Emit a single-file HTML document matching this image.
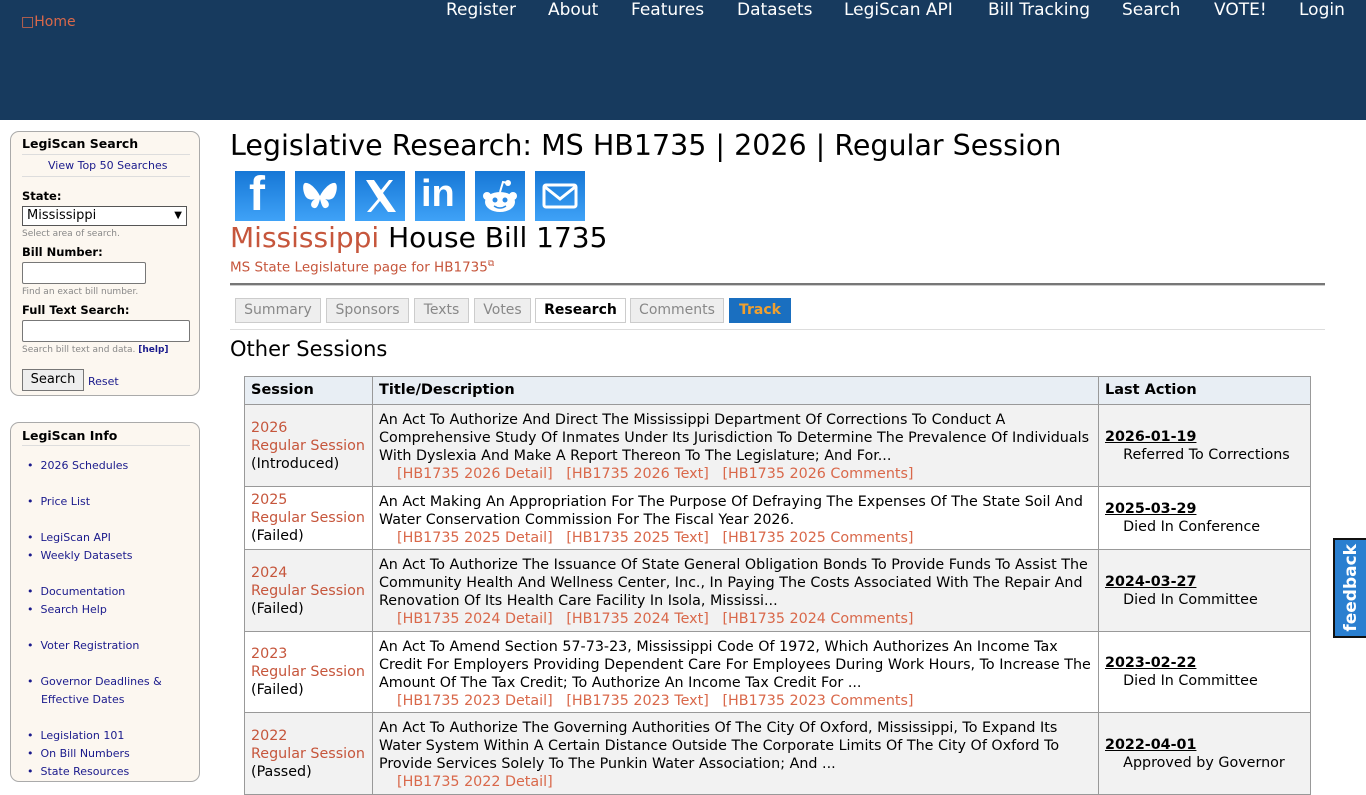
<!DOCTYPE html>
<html><head><meta charset="utf-8"><style>
*{box-sizing:border-box}
body{margin:0;width:1366px;height:768px;overflow:hidden;background:#fff;font-family:"DejaVu Sans","Liberation Sans",sans-serif;color:#000;position:relative}
.a{position:absolute;white-space:nowrap}
#hdr{position:absolute;left:0;top:0;width:1366px;height:120px;background:#173a5e}
#hdr .n{position:absolute;top:0;color:#fff;font-size:17px}
.box{position:absolute;left:10px;width:190px;background:#fcf7f0;border:1px solid #aaa;border-radius:9px}
.box h4{margin:0;position:absolute;left:11px;font-size:12.5px;font-weight:bold}
.hr{position:absolute;left:11px;width:168px;height:1px;background:#ddd}
.lbl{font-size:11.5px;font-weight:bold}
.hint{font-size:9px;color:#888}
.lnk{color:#1a1a8c;font-size:11px}
.sh{position:absolute;top:171px;width:50px;height:50px;background:linear-gradient(#1677d6,#3fa2f7)}
.tab{position:absolute;top:298px;height:25px;border:1px solid #ccc;background:#eee;color:#888;font-size:14px;text-align:center;line-height:23px}
table{position:absolute;left:244px;top:376px;border-collapse:collapse;font-size:14.3px;width:1067px}
td,th{border:1px solid #999;vertical-align:top;padding:6px 6px 0 6px;line-height:18px;white-space:nowrap}
td.m{vertical-align:middle;padding-top:0}
th{background:#e8eef4;text-align:left;height:28px;font-size:14.5px;padding-top:4px}
tr.g td{background:#f2f2f2}
.r{color:#c6563c}
.lk{color:#d9684a;padding-left:18px}
.d{font-weight:bold;text-decoration:underline;display:block}
</style></head><body>
<div id="hdr">
<span class="a" style="left:21px;top:14px;color:#d9684a;font-size:14px">&#9633;Home</span>
<span class="n" style="left:446px">Register</span>
<span class="n" style="left:548px">About</span>
<span class="n" style="left:631px">Features</span>
<span class="n" style="left:737px">Datasets</span>
<span class="n" style="left:844px">LegiScan API</span>
<span class="n" style="left:988px">Bill Tracking</span>
<span class="n" style="left:1122px">Search</span>
<span class="n" style="left:1214px">VOTE!</span>
<span class="n" style="left:1299px">Login</span>
</div>

<div class="box" style="top:131px;height:265px">
<h4 style="top:4px">LegiScan Search</h4>
<div class="hr" style="top:22px"></div>
<span class="a lnk" style="left:37px;top:27px">View Top 50 Searches</span>
<div class="hr" style="top:44px"></div>
<span class="a lbl" style="left:11px;top:57px">State:</span>
<div class="a" style="left:11px;top:74px;width:165px;height:20px;border:1px solid #555;background:#fff;font-size:13px;padding-left:4px;line-height:18px">Mississippi<span style="position:absolute;right:4px;font-size:10px">&#9660;</span></div>
<span class="a hint" style="left:11px;top:97px">Select area of search.</span>
<span class="a lbl" style="left:11px;top:113px">Bill Number:</span>
<div class="a" style="left:11px;top:130px;width:124px;height:22px;border:1px solid #777;background:#fff;border-radius:2px"></div>
<span class="a hint" style="left:11px;top:155px">Find an exact bill number.</span>
<span class="a lbl" style="left:11px;top:171px">Full Text Search:</span>
<div class="a" style="left:11px;top:188px;width:168px;height:22px;border:1px solid #777;background:#fff;border-radius:2px"></div>
<span class="a hint" style="left:11px;top:213px">Search bill text and data. <b style="color:#1a1a8c">[help]</b></span>
<div class="a" style="left:11px;top:237px;width:62px;height:22px;border:1px solid #777;background:#eee;font-size:13px;text-align:center;line-height:20px">Search</div>
<span class="a lnk" style="left:77px;top:243px">Reset</span>
</div>

<div class="box" style="top:422px;height:360px">
<h4 style="top:5px">LegiScan Info</h4>
<div class="hr" style="top:22px"></div>
<div class="a lnk" style="left:16px;top:34px;line-height:18px">
&bull;&nbsp; 2026 Schedules<br><br>&bull;&nbsp; Price List<br><br>&bull;&nbsp; LegiScan API<br>&bull;&nbsp; Weekly Datasets<br><br>&bull;&nbsp; Documentation<br>&bull;&nbsp; Search Help<br><br>&bull;&nbsp; Voter Registration<br><br>&bull;&nbsp; Governor Deadlines &amp;<br>&nbsp;&nbsp;&nbsp; Effective Dates<br><br>&bull;&nbsp; Legislation 101<br>&bull;&nbsp; On Bill Numbers<br>&bull;&nbsp; State Resources</div>
</div>

<span class="a" style="left:230px;top:129px;font-size:28.5px">Legislative Research: MS HB1735 | 2026 | Regular Session</span>
<div class="sh" style="left:235px"><span class="a" style="left:14px;top:-4px;color:#fff;font-size:48px;font-weight:bold;font-family:'Liberation Sans'">f</span></div>
<div class="sh" style="left:295px"><svg width="50" height="50"><path d="M25 25C21 17 14 11 10 12 7 13 8 22 11 26 13 29 18 29 20 28 15 31 15 36 19 37 23 38 24 31 25 28 26 31 27 38 31 37 35 36 35 31 30 28 32 29 37 29 39 26 42 22 43 13 40 12 36 11 29 17 25 25Z" fill="#fff"/></svg></div>
<div class="sh" style="left:355px"><svg width="50" height="50"><path d="M11 9h8l7 10 8-10h4L28 22l13 19h-8l-8-11-9 11h-4l11-13z" fill="#fff"/></svg></div>
<div class="sh" style="left:415px"><span class="a" style="left:6px;top:2px;color:#fff;font-size:38px;font-weight:bold;font-family:'Liberation Sans'">in</span></div>
<div class="sh" style="left:475px"><svg width="50" height="50"><ellipse cx="25" cy="31" rx="15" ry="10" fill="#fff"/><circle cx="12" cy="25" r="4" fill="#fff"/><circle cx="38" cy="25" r="4" fill="#fff"/><circle cx="33" cy="12" r="3" fill="#fff"/><path d="M25 21l3-10 5 1" stroke="#fff" stroke-width="2" fill="none"/><circle cx="20" cy="29" r="2.5" fill="#2a8ae6"/><circle cx="30" cy="29" r="2.5" fill="#2a8ae6"/><path d="M19 35q6 4 12 0" stroke="#2a8ae6" stroke-width="1.5" fill="none"/></svg></div>
<div class="sh" style="left:535px"><svg width="50" height="50"><rect x="9" y="14" width="32" height="22" rx="2" fill="none" stroke="#fff" stroke-width="3"/><path d="M10 16l15 12 15-12" stroke="#fff" stroke-width="3" fill="none"/></svg></div>
<span class="a" style="left:230px;top:221px;font-size:28px"><span style="color:#c6563c">Mississippi</span> House Bill 1735</span>
<span class="a" style="left:230px;top:259px;font-size:13.5px;color:#c6563c">MS State Legislature page for HB1735<sup style="font-size:9px">&#10697;</sup></span>
<div class="a" style="left:230px;top:283px;width:1095px;height:3px;border-top:2px solid #777;border-bottom:1px solid #ccc"></div>
<div class="tab" style="left:235px;width:86px">Summary</div>
<div class="tab" style="left:326px;width:83px">Sponsors</div>
<div class="tab" style="left:414px;width:55px">Texts</div>
<div class="tab" style="left:474px;width:57px">Votes</div>
<div class="tab" style="left:535px;width:91px;background:#fff;color:#000;font-weight:bold">Research</div>
<div class="tab" style="left:630px;width:94px">Comments</div>
<div class="tab" style="left:729px;width:62px;background:#1a6fc0;color:#f0a030;font-weight:bold;border-color:#1a6fc0">Track</div>
<div class="a" style="left:230px;top:329px;width:1095px;height:1px;background:#ddd"></div>
<span class="a" style="left:230px;top:337px;font-size:21px">Other Sessions</span>

<table>
<tr><th style="width:128px">Session</th><th style="width:726px">Title/Description</th><th>Last Action</th></tr>
<tr class="g" style="height:82px"><td class="m"><span class="r">2026<br>Regular Session</span><br>(Introduced)</td><td>An Act To Authorize And Direct The Mississippi Department Of Corrections To Conduct A<br>Comprehensive Study Of Inmates Under Its Jurisdiction To Determine The Prevalence Of Individuals<br>With Dyslexia And Make A Report Thereon To The Legislature; And For...<br><span class="lk">[HB1735 2026 Detail]&nbsp;&nbsp; [HB1735 2026 Text]&nbsp;&nbsp; [HB1735 2026 Comments]</span></td><td class="m"><span class="d">2026-01-19</span>&nbsp;&nbsp;&nbsp; Referred To Corrections</td></tr>
<tr style="height:63px"><td class="m"><span class="r">2025<br>Regular Session</span><br>(Failed)</td><td>An Act Making An Appropriation For The Purpose Of Defraying The Expenses Of The State Soil And<br>Water Conservation Commission For The Fiscal Year 2026.<br><span class="lk">[HB1735 2025 Detail]&nbsp;&nbsp; [HB1735 2025 Text]&nbsp;&nbsp; [HB1735 2025 Comments]</span></td><td class="m"><span class="d">2025-03-29</span>&nbsp;&nbsp;&nbsp; Died In Conference</td></tr>
<tr class="g" style="height:82px"><td class="m"><span class="r">2024<br>Regular Session</span><br>(Failed)</td><td>An Act To Authorize The Issuance Of State General Obligation Bonds To Provide Funds To Assist The<br>Community Health And Wellness Center, Inc., In Paying The Costs Associated With The Repair And<br>Renovation Of Its Health Care Facility In Isola, Mississi...<br><span class="lk">[HB1735 2024 Detail]&nbsp;&nbsp; [HB1735 2024 Text]&nbsp;&nbsp; [HB1735 2024 Comments]</span></td><td class="m"><span class="d">2024-03-27</span>&nbsp;&nbsp;&nbsp; Died In Committee</td></tr>
<tr style="height:81px"><td class="m"><span class="r">2023<br>Regular Session</span><br>(Failed)</td><td>An Act To Amend Section 57-73-23, Mississippi Code Of 1972, Which Authorizes An Income Tax<br>Credit For Employers Providing Dependent Care For Employees During Work Hours, To Increase The<br>Amount Of The Tax Credit; To Authorize An Income Tax Credit For ...<br><span class="lk">[HB1735 2023 Detail]&nbsp;&nbsp; [HB1735 2023 Text]&nbsp;&nbsp; [HB1735 2023 Comments]</span></td><td class="m"><span class="d">2023-02-22</span>&nbsp;&nbsp;&nbsp; Died In Committee</td></tr>
<tr class="g" style="height:82px"><td class="m"><span class="r">2022<br>Regular Session</span><br>(Passed)</td><td>An Act To Authorize The Governing Authorities Of The City Of Oxford, Mississippi, To Expand Its<br>Water System Within A Certain Distance Outside The Corporate Limits Of The City Of Oxford To<br>Provide Services Solely To The Punkin Water Association; And ...<br><span class="lk">[HB1735 2022 Detail]</span></td><td class="m"><span class="d">2022-04-01</span>&nbsp;&nbsp;&nbsp; Approved by Governor</td></tr>
</table>

<div class="a" style="left:1333px;top:538px;width:33px;height:100px;background:#2a7fd0;border:2px solid #111;border-right:none;display:flex;align-items:center;justify-content:center"><span style="writing-mode:vertical-rl;transform:rotate(180deg);color:#fff;font-size:17px;font-weight:bold">feedback</span></div>
</body></html>
